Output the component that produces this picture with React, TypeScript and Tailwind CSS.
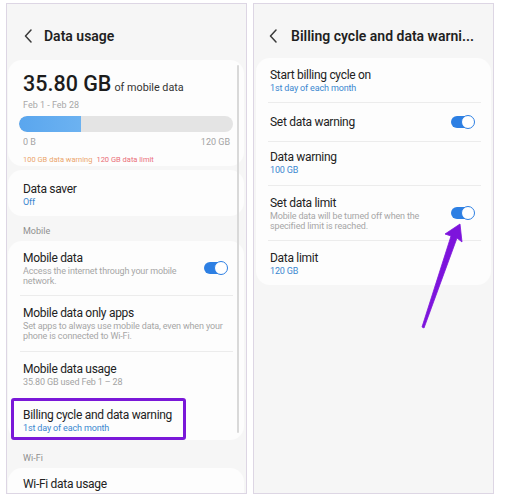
import React from "react";

const FONT = { fontFamily: "Roboto, 'Noto Sans', Arial, sans-serif" };

function Toggle() {
  return (
    <div className="relative w-[24px] h-[14px] shrink-0">
      <div className="absolute left-0 right-[2px] top-[1px] bottom-[1px] rounded-full bg-[#2d7fe3]" />
      <div className="absolute right-0 top-0 w-[14px] h-[14px] rounded-full bg-white border-[1.5px] border-[#2d7fe3]" />
    </div>
  );
}

function Chevron() {
  return (
    <svg width="9" height="14" viewBox="0 0 9 14" className="shrink-0">
      <path d="M7 1 L1.5 7 L7 13" fill="none" stroke="#3a3a3a" strokeWidth="1.5" strokeLinecap="round" strokeLinejoin="round" />
    </svg>
  );
}

function Divider() {
  return <div className="h-px bg-[#ececec] ml-[12px] mr-[11px]" />;
}

const T = "text-[12px] leading-[16px] tracking-[-0.3px] text-[#222]";
const S = "text-[9px] leading-[11px] tracking-[-0.15px]";
const D = "text-[9px] leading-[10px] tracking-[-0.15px] text-[#a6a6a6]";

export default function App() {
  return (
    <div className="relative w-[507px] h-[500px] bg-white flex gap-[6px] pl-[6px] pt-[3px]" style={FONT}>
      {/* Left panel */}
      <div className="relative w-[241px] h-[491px] border border-[#ddd6e4] bg-[#f6f6f6] overflow-hidden flex flex-col">
        <div className="flex items-center pl-[17px] pt-[22px] gap-[11px]">
          <Chevron />
          <div className="text-[14px] leading-[20px] font-semibold text-[#1f1f1f]">Data usage</div>
        </div>

        {/* Summary card */}
        <div className="mt-[14px] ml-[1px] mr-[2px] rounded-[14px] bg-[#fdfdfd] pt-[11px] h-[108px]">
          <div className="pl-[15px] flex items-baseline gap-[3px]">
            <span className="text-[21.5px] leading-[26px] font-medium text-[#1c1c1c]">35.80 GB</span>
            <span className="text-[10.8px] text-[#333]">of mobile data</span>
          </div>
          <div className="pl-[15px] mt-[2px] text-[9px] leading-[12px] text-[#a8a8a8]">Feb 1 - Feb 28</div>
          <div className="mx-[11px] mt-[5px] h-[16px] rounded-full bg-[#e4e4e4] overflow-hidden">
            <div className="h-full w-[62px] bg-gradient-to-r from-[#5aa6ee] to-[#6cb2f1] rounded-l-full" />
          </div>
          <div className="flex justify-between pl-[15px] pr-[14px] mt-[3px] text-[9px] leading-[14px] text-[#a3a3a3]">
            <span>0 B</span>
            <span>120 GB</span>
          </div>
          <div className="pl-[15px] mt-[5px] text-[7.5px] leading-[12px] flex gap-[4px]">
            <span className="text-[#eba56c]">100 GB data warning</span>
            <span className="text-[#ea6d78]">120 GB data limit</span>
          </div>
        </div>

        {/* Data saver */}
        <div className="mt-[4px] ml-[1px] mr-[2px] rounded-[14px] bg-[#fdfdfd] pt-[11px] pb-[8px] pl-[15px]">
          <div className={T}>Data saver</div>
          <div className={`${S} text-[#3b88d0]`}>Off</div>
        </div>

        <div className="pt-[9px] pb-[4px] pl-[16px] text-[9px] leading-[12px] text-[#8f8f8f]">Mobile</div>

        {/* Mobile card */}
        <div className="ml-[1px] mr-[2px] rounded-[14px] bg-[#fdfdfd]">
          <div className="flex items-center h-[54px] pl-[15px] pr-[16px]">
            <div className="flex-1">
              <div className={T}>Mobile data</div>
              <div className={`${D} w-[170px]`}>Access the internet through your mobile network.</div>
            </div>
            <Toggle />
          </div>
          <Divider />
          <div className="h-[55px] pl-[15px] pt-[9px]">
            <div className={T}>Mobile data only apps</div>
            <div className={`${D} pr-[10px]`}>Set apps to always use mobile data, even when your phone is connected to Wi-Fi.</div>
          </div>
          <Divider />
          <div className="h-[46px] pl-[15px] pt-[9px]">
            <div className={T}>Mobile data usage</div>
            <div className={`${S} text-[#a3a3a3]`}>35.80 GB used Feb 1 – 28</div>
          </div>
          <div className="relative h-[42px] pl-[15px] pt-[9px]">
            <div className={T}>Billing cycle and data warning</div>
            <div className={`${S} text-[#3b88d0]`}>1st day of each month</div>
            <div className="absolute left-[3px] top-0 w-[175px] h-[42px] border-[3px] border-[#7a18d8] rounded-[3px]" />
          </div>
        </div>

        <div className="pt-[12px] pb-[4px] pl-[16px] text-[9px] leading-[12px] text-[#8f8f8f]">Wi-Fi</div>

        <div className="ml-[1px] mr-[2px] rounded-[14px] bg-[#fdfdfd] pt-[8px] pl-[15px] pb-[8px]">
          <div className={T}>Wi-Fi data usage</div>
          <div className={`${S} text-[#a3a3a3]`}>1.52 GB used Feb 1 – 28</div>
        </div>

        {/* scrollbar */}
        <div className="absolute left-[230px] top-[61px] w-[2px] h-[368px] rounded-full bg-[#d9d9d9]" />
      </div>

      {/* Right panel */}
      <div className="relative w-[241px] h-[491px] border border-[#ddd6e4] bg-[#f6f6f6] overflow-hidden flex flex-col">
        <div className="flex items-center pl-[15px] pt-[22px] gap-[13px]">
          <Chevron />
          <div className="text-[14px] leading-[20px] font-semibold text-[#1f1f1f] whitespace-nowrap">Billing cycle and data warni...</div>
        </div>

        <div className="mt-[12px] mx-[2px] rounded-[14px] bg-[#fdfdfd]">
          <div className="h-[44px] pl-[14px] pt-[9px]">
            <div className={T}>Start billing cycle on</div>
            <div className={`${S} text-[#3b88d0]`}>1st day of each month</div>
          </div>
          <div className="h-px bg-[#ececec] ml-[12px] mr-[10px]" />
          <div className="h-[38px] flex items-center pl-[14px] pr-[16px]">
            <div className={`flex-1 ${T}`}>Set data warning</div>
            <Toggle />
          </div>
          <div className="h-px bg-[#ececec] ml-[12px] mr-[10px]" />
          <div className="h-[43px] pl-[14px] pt-[7px]">
            <div className={T}>Data warning</div>
            <div className={`${S} text-[#3b88d0]`}>100 GB</div>
          </div>
          <div className="h-px bg-[#ececec] ml-[12px] mr-[10px]" />
          <div className="h-[54px] flex items-center pl-[14px] pr-[16px]">
            <div className="flex-1">
              <div className={T}>Set data limit</div>
              <div className={`${D} w-[170px]`}>Mobile data will be turned off when the specified limit is reached.</div>
            </div>
            <Toggle />
          </div>
          <div className="h-px bg-[#ececec] ml-[12px] mr-[10px]" />
          <div className="h-[44px] pl-[14px] pt-[9px]">
            <div className={T}>Data limit</div>
            <div className={`${S} text-[#3b88d0]`}>120 GB</div>
          </div>
        </div>
      </div>

      {/* Arrow overlay */}
      <svg className="absolute inset-0 pointer-events-none" width="507" height="500" viewBox="0 0 507 500">
        <polygon
          points="460,224 462,242 457,238 424,328 422,327 451,236 445,234"
          fill="#7d14dc"
          stroke="#7d14dc"
          strokeWidth="0.8"
          strokeLinejoin="round"
        />
      </svg>
    </div>
  );
}
